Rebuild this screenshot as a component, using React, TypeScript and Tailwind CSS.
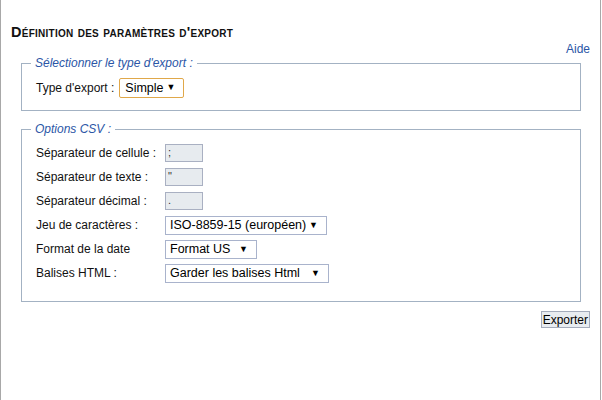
import { ReactNode } from 'react'

function Legend({ children }: { children: ReactNode }) {
  return (
    <legend className="-ml-[5px] px-[4px] text-[12px] italic leading-[14px] text-[#2b56a6]">
      {children}
    </legend>
  )
}

function FakeSelect({ value, width }: { value: string; width: string }) {
  return (
    <div
      className={`flex h-[19px] items-center justify-between whitespace-nowrap border border-[#a9b3cc] bg-white pl-[4px] pr-[8px] text-[12.5px] text-black ${width}`}
    >
      <span>{value}</span>
      <span className="text-[9px]">▼</span>
    </div>
  )
}

function TextBox({ value }: { value: string }) {
  return (
    <div className="h-[18px] w-[38px] border border-[#a9b0c2] bg-[#e7ebef] pl-[2px] text-[11px] leading-[14px] text-[#333]">
      {value}
    </div>
  )
}

export default function App() {
  const rows: { label: string; field: ReactNode }[] = [
    { label: 'Séparateur de cellule :', field: <TextBox value=";" /> },
    { label: 'Séparateur de texte :', field: <TextBox value={'"'} /> },
    { label: 'Séparateur décimal :', field: <TextBox value="." /> },
    { label: 'Jeu de caractères :', field: <FakeSelect value="ISO-8859-15 (européen)" width="w-[162px]" /> },
    { label: 'Format de la date', field: <FakeSelect value="Format US" width="w-[92px]" /> },
    { label: 'Balises HTML :', field: <FakeSelect value="Garder les balises Html" width="w-[164px]" /> },
  ]

  return (
    <div className="h-[400px] w-[601px] border-x border-[#a8a8a8] bg-white font-['Liberation_Sans',Arial,sans-serif] text-[12px] text-[#111]">
      <div className="pl-[10px] pt-[24px]">
        <h1 className="text-[14.5px] font-bold leading-[17px] tracking-[0.25px] [font-variant:small-caps]">
          Définition des paramètres d'export
        </h1>
      </div>
      <div className="pr-[10px] pt-[1px] text-right text-[12px] leading-[14px] text-[#2b56a6]">Aide</div>

      <fieldset className="ml-[20px] w-[560px] border border-[#a3b2c3] px-[14px] pb-[12px] pt-[8px]">
        <Legend>Sélectionner le type d'export :</Legend>
        <div className="flex items-center gap-[5px]">
          <span>Type d'export :</span>
          <div className="flex h-[20px] w-[65px] items-center justify-between rounded-[2px] border border-[#e0a84a] bg-white pl-[5px] pr-[8px] text-[12.5px] text-black">
            <span>Simple</span>
            <span className="text-[9px]">▼</span>
          </div>
        </div>
      </fieldset>

      <fieldset className="ml-[20px] mt-[11px] w-[560px] border border-[#a3b2c3] px-[14px] pb-[13px] pt-[8px]">
        <Legend>Options CSV :</Legend>
        <div className="flex flex-col">
          {rows.map((r) => (
            <div key={r.label} className="flex h-[24px] items-start">
              <span className="w-[129px] pt-[1px] leading-[16px]">{r.label}</span>
              {r.field}
            </div>
          ))}
        </div>
      </fieldset>

      <div className="flex justify-end pr-[10px] pt-[9px]">
        <button className="h-[17px] border border-[#a3abbb] bg-[#e8ecf0] px-[1px] text-[12px] leading-[14px] text-black">
          Exporter
        </button>
      </div>
    </div>
  )
}
